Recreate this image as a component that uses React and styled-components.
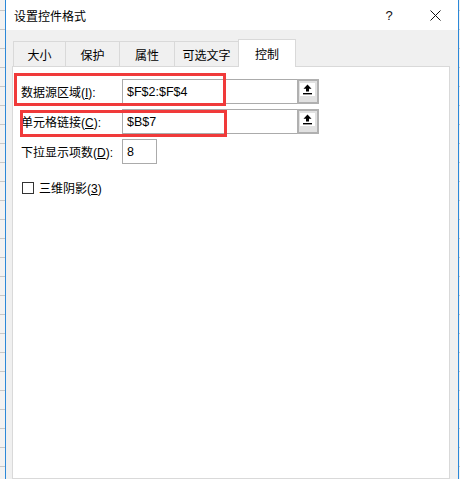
import styled, { createGlobalStyle } from "styled-components";

const Global = createGlobalStyle`
  html, body {
    margin: 0;
    padding: 0;
    background: #ffffff;
  }
  body {
    font-family: "Liberation Sans", "Noto Sans CJK SC", sans-serif;
    font-size: 12px;
    color: #000;
  }
`;

const Screen = styled.div`
  display: flex;
  width: 460px;
  height: 479px;
  overflow: hidden;
`;

/* bit of the excel sheet behind the dialog */
const Sheet = styled.div`
  width: ${(p) => p.w}px;
  flex-shrink: 0;
  background-color: #f2f2f2;
  background-image: repeating-linear-gradient(
    to bottom,
    transparent 0px,
    transparent 9px,
    #c8c8c8 9px,
    #c8c8c8 10px,
    transparent 10px,
    transparent 19px
  );
  background-position: 0 1px;
`;

const Dialog = styled.div`
  flex: 1;
  display: flex;
  flex-direction: column;
  border-left: 1px solid #2b88d8;
  border-right: 1px solid #2b88d8;
  background: #f0f0f0;
`;

const TitleBar = styled.div`
  height: 30px;
  display: flex;
  align-items: center;
  background: #fff;
  padding-left: 8px;
`;

const Title = styled.div`
  flex: 1;
  font-size: 12px;
  padding-top: 1px;
`;

const TitleButton = styled.div`
  width: 46px;
  height: 30px;
  display: flex;
  align-items: center;
  justify-content: center;
  font-size: 13px;
  color: #111;
`;

const Body = styled.div`
  flex: 1;
  display: flex;
  flex-direction: column;
  padding: 9px 8px 0 6px;
`;

const Tabs = styled.div`
  display: flex;
  align-items: flex-end;
  padding-left: 2px;
  height: 28px;
  position: relative;
  z-index: 1;
  margin-bottom: -1px;
`;

const Tab = styled.div`
  width: ${(p) => p.w}px;
  height: ${(p) => (p.active ? 28 : 26)}px;
  box-sizing: border-box;
  margin-left: -1px;
  border: 1px solid #d9d9d9;
  border-bottom: ${(p) => (p.active ? "none" : "1px solid #d9d9d9")};
  background: ${(p) => (p.active ? "#fff" : "#f0f0f0")};
  display: flex;
  align-items: center;
  justify-content: center;
  padding-top: ${(p) => (p.active ? 0 : 1)}px;
  font-size: 12px;
`;

const Panel = styled.div`
  flex: 1;
  background: #fff;
  border: 1px solid #d9d9d9;
  padding: 12px 8px 0 8px;
  display: flex;
  flex-direction: column;
  gap: 5px;
`;

const Row = styled.div`
  position: relative;
  display: flex;
  align-items: center;
  height: 25px;
`;

const Label = styled.div`
  width: 101px;
  flex-shrink: 0;
  font-size: 12px;
  white-space: nowrap;
`;

/* red annotation boxes drawn over the screenshot */
const Highlight = styled.div`
  position: absolute;
  left: ${(p) => p.x}px;
  top: ${(p) => p.y}px;
  width: ${(p) => p.w}px;
  height: ${(p) => p.h}px;
  box-sizing: border-box;
  border: 3px solid #f03a3a;
  pointer-events: none;
`;

const Field = styled.div`
  display: flex;
  width: ${(p) => p.w}px;
  height: 25px;
  box-sizing: border-box;
  border: 1px solid #ababab;
`;

const FieldText = styled.div`
  flex: 1;
  display: flex;
  align-items: center;
  padding-left: 4px;
  font-size: 12.5px;
`;

const PickButton = styled.div`
  width: 22px;
  margin: -1px -1px -1px 0;
  box-sizing: border-box;
  border: 2px solid #b0b0b0;
  background: #e1e1e1;
  padding: 2px 2px 0 1px;
`;

const PickFace = styled.div`
  width: 15px;
  height: 13px;
  background: #fff;
  display: flex;
  align-items: center;
  justify-content: center;
`;

const CheckRow = styled.label`
  display: flex;
  align-items: center;
  gap: 5px;
  margin-top: 10px;
  padding-left: 1px;
  font-size: 12px;
`;

const Box = styled.span`
  width: 12px;
  height: 12px;
  box-sizing: border-box;
  border: 1px solid #333;
  background: #fff;
`;

const UpArrow = () => (
  <svg width="11" height="11" viewBox="0 0 11 11">
    <path d="M5.5 0.5 L9.5 4.8 L7 4.8 L7 7.5 L4 7.5 L4 4.8 L1.5 4.8 Z" fill="#000" />
    <rect x="1" y="9" width="9" height="1.4" fill="#000" />
  </svg>
);

const CloseIcon = () => (
  <svg width="11" height="11" viewBox="0 0 11 11">
    <path d="M0.5 0.5 L10.5 10.5 M10.5 0.5 L0.5 10.5" stroke="#111" strokeWidth="1" />
  </svg>
);

const tabs = [
  { name: "大小", w: 53 },
  { name: "保护", w: 55 },
  { name: "属性", w: 56 },
  { name: "可选文字", w: 65 },
  { name: "控制", w: 58, active: true },
];

export default function App() {
  return (
    <Screen>
      <Global />
      <Sheet w={5} />
      <Dialog>
        <TitleBar>
          <Title>设置控件格式</Title>
          <TitleButton>?</TitleButton>
          <TitleButton>
            <CloseIcon />
          </TitleButton>
        </TitleBar>
        <Body>
          <Tabs>
            {tabs.map((t) => (
              <Tab key={t.name} w={t.w} active={t.active}>
                {t.name}
              </Tab>
            ))}
          </Tabs>
          <Panel>
            <Row>
              <Highlight x={-7} y={-6} w={212} h={33} />
              <Label>
                数据源区域(<u>I</u>):
              </Label>
              <Field w={197}>
                <FieldText>$F$2:$F$4</FieldText>
                <PickButton>
                  <PickFace>
                    <UpArrow />
                  </PickFace>
                </PickButton>
              </Field>
            </Row>
            <Row>
              <Highlight x={-1} y={1} w={207} h={27} />
              <Label>
                单元格链接(<u>C</u>):
              </Label>
              <Field w={197}>
                <FieldText>$B$7</FieldText>
                <PickButton>
                  <PickFace>
                    <UpArrow />
                  </PickFace>
                </PickButton>
              </Field>
            </Row>
            <Row>
              <Label>
                下拉显示项数(<u>D</u>):
              </Label>
              <Field w={35}>
                <FieldText>8</FieldText>
              </Field>
            </Row>
            <CheckRow>
              <Box />
              <span>
                三维阴影(<u>3</u>)
              </span>
            </CheckRow>
          </Panel>
        </Body>
      </Dialog>
      <Sheet w={1} />
    </Screen>
  );
}
